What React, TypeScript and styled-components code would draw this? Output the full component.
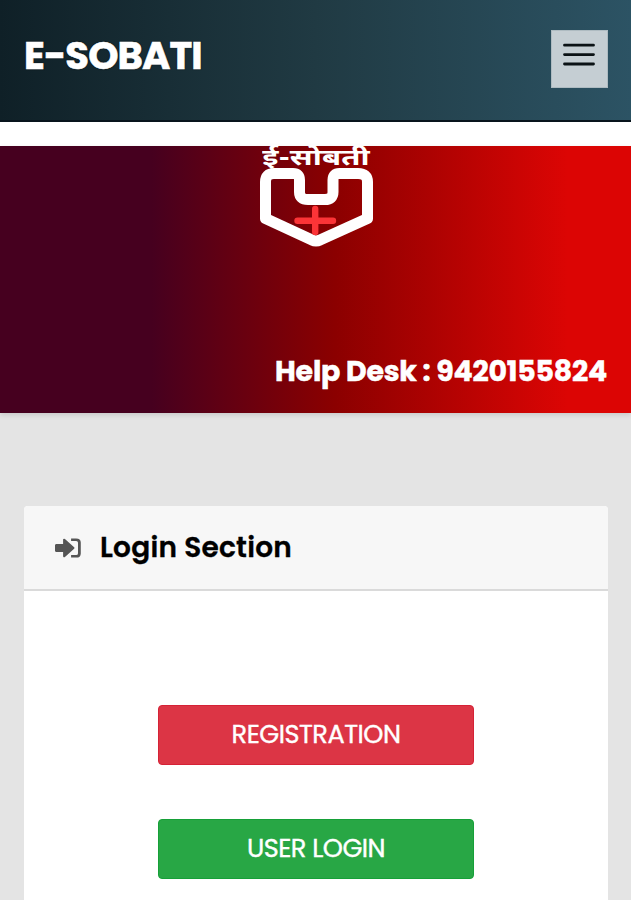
import React from "react";
import styled, { createGlobalStyle } from "styled-components";

const GlobalStyle = createGlobalStyle`
  *, *::before, *::after { box-sizing: border-box; }
  body {
    margin: 0;
    background: #e4e4e4;
    font-family: Poppins, Inter, "Noto Sans", sans-serif;
    color: #000;
  }
`;

const Page = styled.div`
  height: 900px;
  overflow: hidden;
`;

const Navbar = styled.header`
  display: flex;
  justify-content: space-between;
  align-items: flex-start;
  height: 122px;
  padding: 30px 23px 0 24px;
  background: linear-gradient(to right, #0f2027, #203a43 50%, #2c5364);
  border-bottom: 2px solid #08141c;
`;

const Brand = styled.h1`
  margin: 0;
  font-size: 38.5px;
  line-height: 51px;
  font-weight: 700;
  letter-spacing: -0.9px;
  color: #fff;
  white-space: nowrap;
  -webkit-text-stroke: 0.6px #fff;
  text-shadow: 0 0 2px #000;
`;

const MenuButton = styled.button`
  display: flex;
  justify-content: center;
  width: 57px;
  height: 58px;
  padding: 12px 1px 0 0;
  border: 1px solid #aebbc1;
  background: #c5ced3;
`;

const Gap = styled.div`
  height: 24px;
  background: #fff;
`;

const Banner = styled.section`
  display: flex;
  flex-direction: column;
  justify-content: space-between;
  height: 267px;
  padding: 0 24px 22px;
  background: linear-gradient(to right, #46001f 0%, #46001f 24%, #8b0000 53%, #dc0504 90%, #dc0504 100%);
  box-shadow: 0 2px 5px rgba(0, 0, 0, 0.12);
`;

const Logo = styled.div`
  display: flex;
  flex-direction: column;
  align-items: center;
`;

const LogoName = styled.span`
  height: 21px;
  font-family: "Noto Sans Devanagari", "Noto Sans", sans-serif;
  font-size: 22.5px;
  line-height: 27px;
  font-weight: 700;
  color: #fff;
  white-space: nowrap;
  transform: scaleX(1.38);
`;

const HelpDesk = styled.p`
  margin: 0;
  align-self: flex-end;
  font-size: 28.4px;
  line-height: 40px;
  font-weight: 700;
  letter-spacing: -0.2px;
  color: #fff;
  white-space: nowrap;
  -webkit-text-stroke: 0.5px #fff;
`;

const Card = styled.main`
  height: 480px;
  margin: 93px 23px 0 24px;
  background: #fff;
  border-radius: 4px;
  overflow: hidden;
`;

const CardHeader = styled.div`
  display: flex;
  align-items: center;
  gap: 19px;
  height: 85px;
  padding-left: 31px;
  background: #f7f7f7;
  border-bottom: 2px solid #dadada;
`;

const CardTitle = styled.h2`
  margin: 0;
  font-size: 28px;
  line-height: 40px;
  font-weight: 600;
  letter-spacing: 0.25px;
  white-space: nowrap;
  -webkit-text-stroke: 0.3px #000;
`;

const Actions = styled.div`
  display: flex;
  flex-direction: column;
  align-items: center;
  gap: 54px;
  padding-top: 114px;
`;

const ActionButton = styled.button<{ $fill: string; $edge: string }>`
  width: 316px;
  height: 60px;
  padding: 0 0 2px;
  border: 1px solid ${(p) => p.$edge};
  border-radius: 4px;
  background: ${(p) => p.$fill};
  color: #fff;
  font-family: inherit;
  font-size: 25.6px;
  letter-spacing: -0.5px;
  -webkit-text-stroke: 0.4px #fff;
`;

const MenuIcon = () => (
  <svg width="32" height="24" viewBox="0 0 32 24" fill="none" stroke="#0b1215" strokeWidth="2.8" strokeLinecap="round">
    <path d="M1.5 2.2h29M1.5 11.6h29M1.5 21h29" />
  </svg>
);

const LogoMark = () => (
  <svg width="116" height="80" viewBox="258 167 116 80" fill="none" strokeLinejoin="round" strokeLinecap="round">
    <path
      d="M274 173.5H293Q299.5 173.5 299.5 180V192Q299.5 199.5 308 199.5H325Q333 199.5 333 192V180Q333 173.5 339.5 173.5H358Q367.5 173.5 367.5 182V218.5L320 240Q316 242 312 240L265.5 218.5V182Q265.5 173.5 274 173.5Z"
      stroke="#fff"
      strokeWidth="11"
    />
    <path d="M297.5 220.8H333M315.2 209V232" stroke="#fb3437" strokeWidth="6.4" />
  </svg>
);

const SignInIcon = () => (
  <svg width="26" height="22" viewBox="0 176 1536 1440" fill="#555" preserveAspectRatio="none">
    <path d="M1150 896q0 26-19 45l-544 544q-19 19-45 19t-45-19-19-45v-288H64q-26 0-45-19t-19-45V704q0-26 19-45t45-19h414V352q0-26 19-45t45-19 45 19l544 544q19 19 19 45z" />
    <path
      d="M950 352h298q192 0 192 192v704q0 192-192 192H950"
      fill="none"
      stroke="#555"
      strokeWidth="165"
    />
  </svg>
);

export default function App() {
  return (
    <>
      <GlobalStyle />
      <Page>
        <Navbar>
          <Brand>E-SOBATI</Brand>
          <MenuButton aria-label="Menu">
            <MenuIcon />
          </MenuButton>
        </Navbar>
        <Gap />
        <Banner>
          <Logo>
            <LogoName lang="mr">ई-सोबती</LogoName>
            <LogoMark />
          </Logo>
          <HelpDesk>Help Desk : 9420155824</HelpDesk>
        </Banner>
        <Card>
          <CardHeader>
            <SignInIcon />
            <CardTitle>Login Section</CardTitle>
          </CardHeader>
          <Actions>
            <ActionButton $fill="#dc3545" $edge="#d52236">REGISTRATION</ActionButton>
            <ActionButton $fill="#28a745" $edge="#16a038">USER LOGIN</ActionButton>
          </Actions>
        </Card>
      </Page>
    </>
  );
}
